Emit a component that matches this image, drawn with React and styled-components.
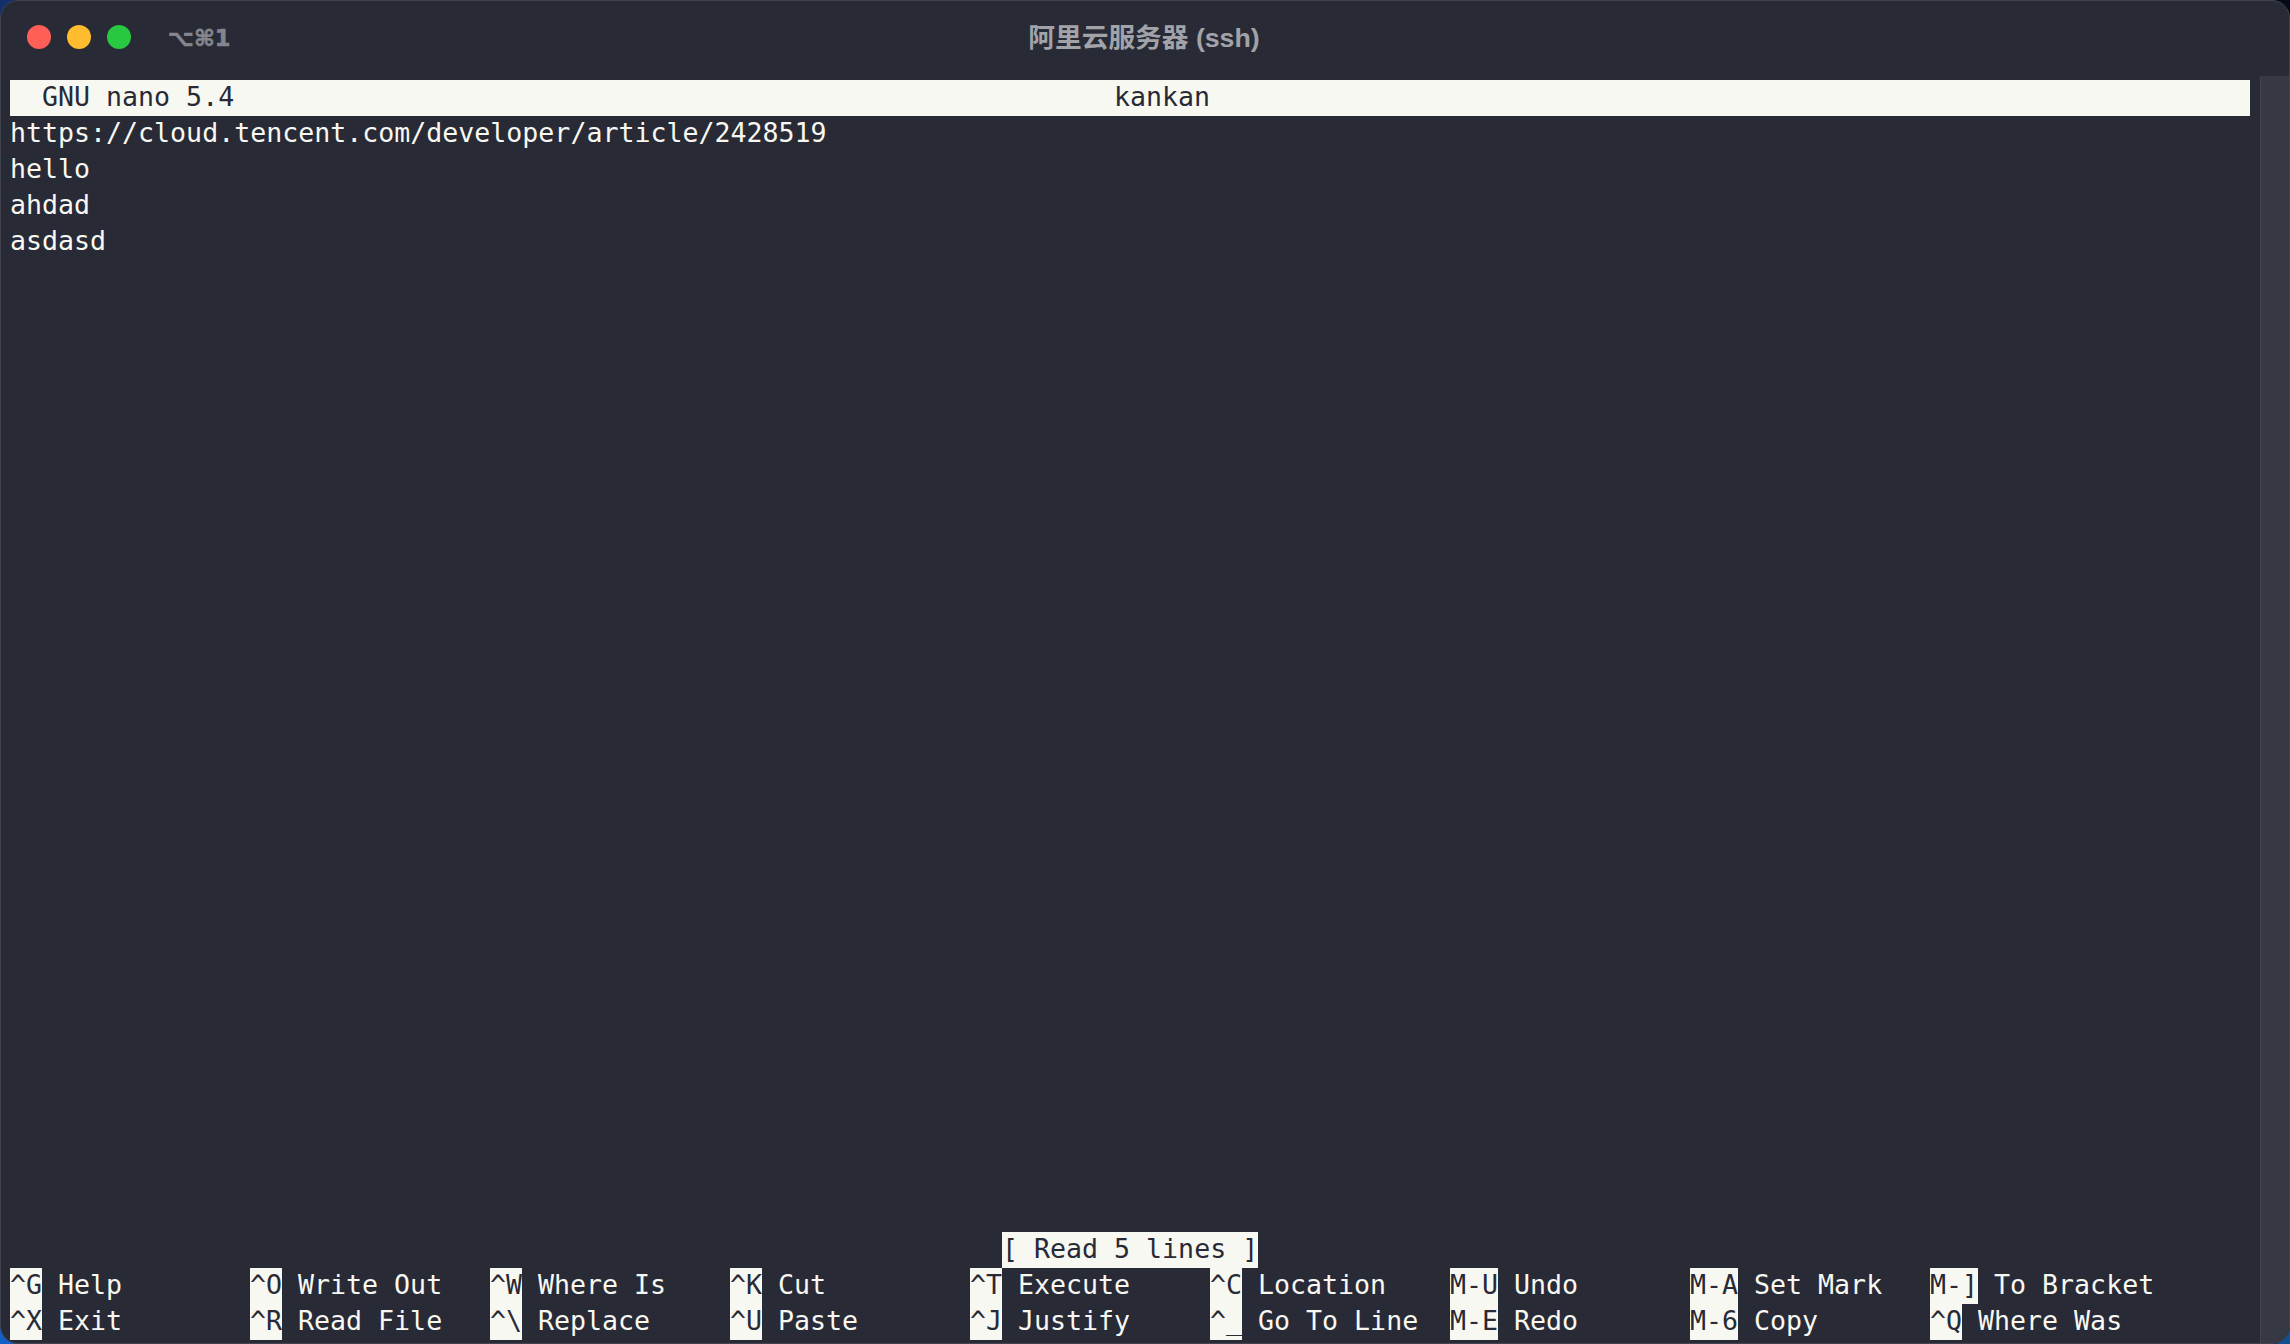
import React from "react";
import styled, { createGlobalStyle } from "styled-components";

const Global = createGlobalStyle`
  html, body { margin: 0; padding: 0; width: 2290px; height: 1344px; overflow: hidden; }
  body { background: #0a1226; }
`;

const Wallpaper = styled.div`
  width: 2290px;
  height: 1344px;
  background:
    radial-gradient(circle at 0 100%, #1560c8 0, #1560c8 14px, transparent 24px),
    radial-gradient(circle at 100% 100%, #14508f 0, #14508f 10px, transparent 22px),
    radial-gradient(circle at 0 0, #14306a 0, #14306a 12px, transparent 24px),
    #050a18;
`;

const Window = styled.div`
  box-sizing: border-box;
  width: 2290px;
  height: 1344px;
  background: #282a36;
  border-radius: 18px;
  border: 1px solid #41434e;
  display: flex;
  flex-direction: column;
  overflow: hidden;
`;

const TitleBar = styled.header`
  position: relative;
  height: 75px;
  flex: none;
  display: flex;
  align-items: center;
  padding: 0 0 3px 26px;
  box-sizing: border-box;
`;

const Lights = styled.div`
  display: flex;
  gap: 16px;
`;

const Light = styled.span`
  width: 24px;
  height: 24px;
  border-radius: 50%;
  background: ${(p) => p.$color};
`;

const TabHint = styled.span`
  margin: 2px 0 0 37px;
  font: 700 22.5px "DejaVu Sans", "Liberation Sans", sans-serif;
  color: #85868d;
  -webkit-text-stroke: 0.6px #85868d;
`;

const Title = styled.h1`
  position: absolute;
  left: 0;
  right: 0;
  top: 0;
  height: 69px;
  margin: 0 2px 0 0;
  display: flex;
  align-items: center;
  justify-content: center;
  font: 700 26.7px "Liberation Sans", "Noto Sans CJK SC", sans-serif;
  color: #a2a3a8;
`;

const Body = styled.div`
  flex: 1;
  display: flex;
  min-height: 0;
`;

const Terminal = styled.main`
  flex: 1;
  display: flex;
  flex-direction: column;
  padding: 4px 10px 3px 9px;
  font: 26.6px/34px "DejaVu Sans Mono", monospace;
  color: #f8f8f2;
  white-space: pre;
  min-width: 0;
`;

const Header = styled.div`
  height: 36px;
  background: #f8f8f2;
  color: #282a36;
  position: relative;
  flex: none;
`;

const FileName = styled.span`
  position: absolute;
  left: 1104px;
`;

const Content = styled.div`
  flex: 1;
`;

const Line = styled.div`
  height: 36px;
`;

const StatusRow = styled.div`
  height: 36px;
  display: flex;
  padding-left: 992px;
`;

const Status = styled.span`
  background: #f8f8f2;
  color: #282a36;
`;

const Shortcuts = styled.div`
  display: grid;
  grid-template-columns: repeat(9, 240px);
  grid-auto-rows: 36px;
`;

const Shortcut = styled.div`
  display: flex;
`;

const Key = styled.span`
  background: #f8f8f2;
  color: #282a36;
`;

const Scrollbar = styled.aside`
  width: 29px;
  flex: none;
  background: #363843;
  border-left: 1px solid #41434e;
  box-sizing: border-box;
`;

const rows = [
  [["^G", "Help"], ["^O", "Write Out"], ["^W", "Where Is"], ["^K", "Cut"], ["^T", "Execute"], ["^C", "Location"], ["M-U", "Undo"], ["M-A", "Set Mark"], ["M-]", "To Bracket"]],
  [["^X", "Exit"], ["^R", "Read File"], ["^\\", "Replace"], ["^U", "Paste"], ["^J", "Justify"], ["^_", "Go To Line"], ["M-E", "Redo"], ["M-6", "Copy"], ["^Q", "Where Was"]],
];

export default function App() {
  return (
    <Wallpaper>
      <Global />
      <Window>
        <TitleBar>
          <Lights>
            <Light $color="#ff5f57" />
            <Light $color="#febc2e" />
            <Light $color="#28c840" />
          </Lights>
          <TabHint>⌥⌘1</TabHint>
          <Title>阿里云服务器 (ssh)</Title>
        </TitleBar>
        <Body>
          <Terminal>
            <Header>
              {"  GNU nano 5.4"}
              <FileName>kankan</FileName>
            </Header>
            <Content>
              <Line>https://cloud.tencent.com/developer/article/2428519</Line>
              <Line>hello</Line>
              <Line>ahdad</Line>
              <Line>asdasd</Line>
            </Content>
            <StatusRow>
              <Status>[ Read 5 lines ]</Status>
            </StatusRow>
            <Shortcuts>
              {rows.flat().map(([k, label]) => (
                <Shortcut key={k}>
                  <Key>{k}</Key>
                  {" " + label}
                </Shortcut>
              ))}
            </Shortcuts>
          </Terminal>
          <Scrollbar />
        </Body>
      </Window>
    </Wallpaper>
  );
}
